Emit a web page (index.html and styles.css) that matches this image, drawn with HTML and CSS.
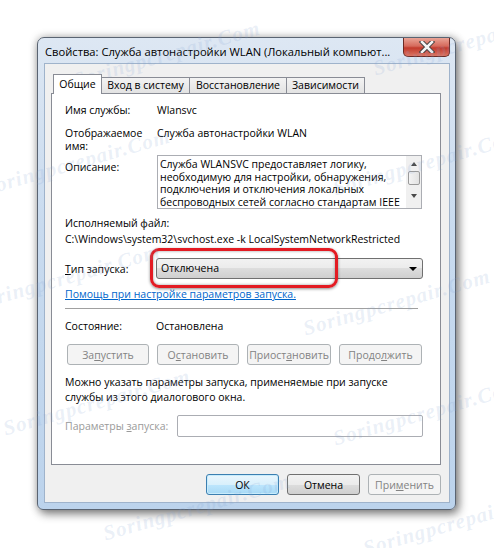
FILE: index.html
```html
<!DOCTYPE html>
<html lang="ru">
<head>
    <meta charset="UTF-8">
    <title>Свойства: Служба автонастройки WLAN</title>
    <link rel="stylesheet" href="styles.css">
</head>
<body>
    <div class="stage">
        <div class="window">
            <div class="titlebar">
                <span class="title">Свойства: Служба автонастройки WLAN (Локальный компьют...</span>
                <div class="close">
                    <svg width="18" height="12" viewBox="0 0 18 12">
                        <path d="M4 1 L14 11 M14 1 L4 11" stroke="#3a3a3a" stroke-width="4.4" stroke-linecap="square"/>
                        <path d="M4 1 L14 11 M14 1 L4 11" stroke="#f4f4f4" stroke-width="2.6" stroke-linecap="square"/>
                    </svg>
                </div>
            </div>

            <div class="client">
                <div class="tabs">
                    <div class="tab active" style="width: 49px">Общие</div>
                    <div class="tab" style="width: 88px">Вход в систему</div>
                    <div class="tab" style="width: 98px">Восстановление</div>
                    <div class="tab" style="width: 79px">Зависимости</div>
                </div>

                <div class="panel">
                    <div class="row row-name">
                        <span class="label">Имя службы:</span>
                        <span class="value">Wlansvc</span>
                    </div>
                    <div class="row row-display">
                        <span class="label">Отображаемое<br>имя:</span>
                        <span class="value">Служба автонастройки WLAN</span>
                    </div>
                    <div class="row row-desc">
                        <span class="label">Описание:</span>
                        <div class="desc">
                            <div class="desc-text">Служба WLANSVC предоставляет логику,<br>необходимую для настройки, обнаружения,<br>подключения и отключения локальных<br>беспроводных сетей согласно стандартам IEEE</div>
                            <div class="scrollbar">
                                <span class="arrow up"></span>
                                <span class="thumb"></span>
                                <span class="arrow down"></span>
                            </div>
                        </div>
                    </div>
                    <div class="exe-label">Исполняемый файл:</div>
                    <div class="exe-path">C:\Windows\system32\svchost.exe -k LocalSystemNetworkRestricted</div>

                    <div class="row row-startup">
                        <span class="label"><u>Т</u>ип запуска:</span>
                        <div class="combo">
                            <span>Отключена</span>
                            <span class="combo-arrow"></span>
                        </div>
                    </div>
                    <a class="help-link" href="#">Помощь при настройке параметров запуска.</a>
                    <div class="separator"></div>

                    <div class="row row-state">
                        <span class="label">Состояние:</span>
                        <span class="value">Остановлена</span>
                    </div>
                    <div class="control-buttons">
                        <div class="btn disabled" style="width: 82px">За<u>п</u>устить</div>
                        <div class="btn disabled" style="width: 82px">О<u>с</u>тановить</div>
                        <div class="btn disabled" style="width: 84px">Приост<u>а</u>новить</div>
                        <div class="btn disabled" style="width: 83px">Продо<u>л</u>жить</div>
                    </div>

                    <div class="hint">Можно указать параметры запуска, применяемые при запуске<br>службы из этого диалогового окна.</div>

                    <div class="row row-params">
                        <span class="label muted">Параметры <u>з</u>апуска:</span>
                        <div class="textbox"></div>
                    </div>

                    <div class="highlight"></div>
                </div>

                <div class="actions">
                    <div class="btn default">ОК</div>
                    <div class="btn">Отмена</div>
                    <div class="btn disabled">При<u>м</u>енить</div>
                </div>
            </div>
        </div>

        <span class="wm" style="left: 70px; top: 42px">Soringpcrepair.Com</span>
        <span class="wm" style="left: 370px; top: 30px">Soringpcrepair.Com</span>
        <span class="wm" style="left: -20px; top: 150px">Soringpcrepair.Com</span>
        <span class="wm" style="left: 330px; top: 150px">Soringpcrepair.Com</span>
        <span class="wm" style="left: -30px; top: 265px">Soringpcrepair.Com</span>
        <span class="wm" style="left: 300px; top: 290px">Soringpcrepair.Com</span>
        <span class="wm" style="left: 0px; top: 390px">Soringpcrepair.Com</span>
        <span class="wm" style="left: 330px; top: 400px">Soringpcrepair.Com</span>
        <span class="wm" style="left: 100px; top: 495px">Soringpcrepair.Com</span>
        <span class="wm" style="left: 360px; top: 510px">Soringpcrepair.Com</span>
    </div>
</body>
</html>
```

FILE: styles.css
```css
body {
    margin: 0;
    background: #ffffff;
    font-family: "Open Sans", "Noto Sans", sans-serif;
    font-size: 10.5px;
    color: #000000;
}
.stage {
    position: relative;
    width: 494px;
    height: 548px;
    padding: 37px 0 0 37px;
    box-sizing: border-box;
    overflow: hidden;
}
.window {
    position: relative;
    width: 419px;
    height: 473px;
    box-sizing: border-box;
    padding: 0 5px 6px 6px;
    border: 1px solid #5a6472;
    border-radius: 7px 7px 6px 6px;
    background: linear-gradient(#dde7f3, #c9dbef 40%, #bcd3ec);
    box-shadow: 3px 4px 10px rgba(0, 0, 0, 0.45), 0 0 8px rgba(0, 0, 0, 0.25);
}
.titlebar {
    display: flex;
    align-items: flex-start;
    height: 25px;
}
.title {
    flex: 1;
    padding: 6px 0 0 1px;
    font-size: 11.2px;
    white-space: nowrap;
    overflow: hidden;
}
.close {
    display: flex;
    justify-content: center;
    align-items: center;
    width: 47px;
    height: 19px;
    box-sizing: border-box;
    border: 1px solid #6b2a24;
    border-top: none;
    border-radius: 0 0 5px 5px;
    background: linear-gradient(#eaa496, #d66a5c 45%, #c23a2c 55%, #db7563);
}
.client {
    width: 406px;
    height: 440px;
    box-sizing: border-box;
    border: 1px solid #9fb3cb;
    background: #f0f0f0;
    padding: 10px 8px 0 6px;
}
.tabs {
    display: flex;
    align-items: flex-end;
    height: 19px;
    padding-left: 2px;
}
.tab {
    height: 16px;
    box-sizing: border-box;
    margin-left: -1px;
    border: 1px solid #898c95;
    border-bottom: none;
    background: linear-gradient(#f3f3f3, #e3e3e3);
    text-align: center;
    line-height: 15px;
    white-space: nowrap;
}
.tab:first-child {
    margin-left: 0;
}
.tab.active {
    position: relative;
    z-index: 1;
    height: 20px;
    margin-bottom: -1px;
    margin-left: 0;
    background: #ffffff;
    line-height: 18px;
}
.tab.active + .tab {
    margin-left: 0;
    border-left: none;
}
.panel {
    position: relative;
    width: 390px;
    height: 372px;
    box-sizing: border-box;
    border: 1px solid #898c95;
    background: #ffffff;
    padding: 9px 0 0 13px;
}
.row {
    display: flex;
    align-items: flex-start;
    line-height: 15px;
}
.label {
    width: 92px;
    flex-shrink: 0;
}
.muted {
    color: #9a9a9a;
    width: 112px;
}
.row-display {
    margin-top: 9px;
    line-height: 13px;
}
.row-desc {
    margin-top: 2px;
}
.row-desc .label {
    padding-top: 5px;
}
.desc {
    display: flex;
    width: 265px;
    height: 54px;
    box-sizing: border-box;
    border: 1px solid #abadb3;
    overflow: hidden;
}
.desc-text {
    flex: 1;
    padding: 2px 0 0 2px;
    line-height: 12.7px;
    white-space: nowrap;
    overflow: hidden;
}
.scrollbar {
    display: flex;
    flex-direction: column;
    align-items: center;
    width: 15px;
    background: #f0f0f0;
    padding-top: 6px;
    box-sizing: border-box;
}
.arrow {
    width: 0;
    height: 0;
    border-left: 3px solid transparent;
    border-right: 3px solid transparent;
}
.arrow.up {
    border-bottom: 4px solid #4a4a4a;
}
.arrow.down {
    border-top: 4px solid #4a4a4a;
    margin-top: 9px;
}
.thumb {
    width: 12px;
    height: 14px;
    margin-top: 5px;
    box-sizing: border-box;
    border: 1px solid #9a9a9a;
    border-radius: 2px;
    background: linear-gradient(90deg, #f4f4f4, #e2e2e2);
}
.exe-label {
    margin-top: 6px;
    line-height: 16px;
}
.exe-path {
    line-height: 16px;
    white-space: nowrap;
}
.row-startup {
    margin-top: 11px;
    align-items: center;
}
.row-startup .label {
    padding-top: 2px;
    width: 91px;
}
.combo {
    display: flex;
    align-items: center;
    justify-content: space-between;
    width: 267px;
    height: 21px;
    box-sizing: border-box;
    border: 1px solid #707070;
    border-radius: 3px;
    padding: 0 5px 0 4px;
    background: linear-gradient(#f2f2f2, #ebebeb 50%, #dddddd 50%, #cfcfcf);
}
.combo-arrow {
    width: 0;
    height: 0;
    border-left: 4px solid transparent;
    border-right: 4px solid transparent;
    border-top: 4px solid #000000;
}
.help-link {
    display: block;
    margin-top: 8px;
    line-height: 15px;
    color: #0066cc;
    width: max-content;
}
.separator {
    width: 353px;
    height: 1px;
    margin-top: 6px;
    background: #a0a0a0;
}
.row-state {
    margin-top: 10px;
}
.row-state .label {
    width: 91px;
}
.control-buttons {
    display: flex;
    gap: 8px;
    margin: 10px 0 0 2px;
}
.btn {
    display: flex;
    justify-content: center;
    align-items: center;
    width: 73px;
    height: 21px;
    box-sizing: border-box;
    border: 1px solid #707070;
    border-radius: 3px;
    background: linear-gradient(#f2f2f2, #ebebeb 50%, #dddddd 50%, #cfcfcf);
    white-space: nowrap;
}
.btn.disabled {
    border-color: #adb2b5;
    background: #f4f4f4;
    color: #838383;
}
.btn.default {
    border-color: #3c7fb1;
    background: linear-gradient(#eaf6fd, #d9f0fc 50%, #bee6fd 50%, #a7d9f5);
    box-shadow: inset 0 0 0 1px #c8ecfc;
}
.hint {
    margin-top: 10px;
    line-height: 15px;
}
.row-params {
    margin-top: 10px;
    align-items: center;
}
.textbox {
    width: 246px;
    height: 22px;
    box-sizing: border-box;
    border: 1px solid #abadb3;
    border-radius: 2px;
}
.highlight {
    position: absolute;
    left: 98px;
    top: 154px;
    width: 188px;
    height: 40px;
    box-sizing: border-box;
    border: 3px solid #e31b23;
    border-radius: 9px;
    box-shadow: 0 1px 3px rgba(0, 0, 0, 0.45), inset 0 0 3px rgba(0, 0, 0, 0.4);
}
.actions {
    display: flex;
    justify-content: flex-end;
    gap: 8px;
    margin-top: 9px;
}
.wm {
    position: absolute;
    transform: rotate(-16deg);
    font-family: "Liberation Serif", serif;
    font-style: italic;
    font-weight: bold;
    font-size: 21px;
    letter-spacing: 1px;
    color: rgba(130, 160, 210, 0.17);
    white-space: nowrap;
    pointer-events: none;
}
```
